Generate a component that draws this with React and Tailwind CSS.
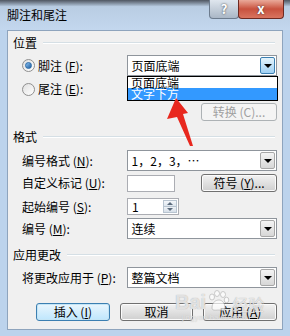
import React from "react";

const font = { fontFamily: '"Noto Sans CJK SC", "Liberation Sans", sans-serif' };

const Arrow = ({ blue }) => (
  <div
    className={
      "absolute right-[1px] top-[1px] bottom-[1px] w-[15px] flex items-center justify-center border rounded-[2px] " +
      (blue
        ? "border-[#3c7fb1] bg-gradient-to-b from-[#e5f4fc] to-[#9fd0f3]"
        : "border-[#a7a7a7] bg-gradient-to-b from-[#f4f4f4] to-[#d7d7d7]")
    }
  >
    <div className="w-0 h-0 border-l-[4px] border-r-[4px] border-t-[4px] border-l-transparent border-r-transparent border-t-black" />
  </div>
);

const Combo = ({ value, blue, className = "" }) => (
  <div className={"relative h-[21px] w-[151px] bg-white border border-[#8f959c] flex items-center pl-[4px] " + className}>
    <span className="text-[12px] text-black leading-none">{value}</span>
    <Arrow blue={blue} />
  </div>
);

const Btn = ({ children, def, disabled, className = "" }) => (
  <div
    className={
      "h-[18px] flex items-center justify-center rounded-[3px] border text-[12px] leading-none " +
      (def
        ? "border-[#3c7fb1] bg-gradient-to-b from-[#eaf6fd] to-[#bee6fd] shadow-[inset_0_0_0_1px_#c4e5f6] text-black "
        : disabled
        ? "border-[#adb2b5] bg-[#f4f4f4] text-[#a0a0a0] "
        : "border-[#707070] bg-gradient-to-b from-[#f2f2f2] to-[#cfcfcf] shadow-[inset_0_0_0_1px_#fbfbfb] text-black ") +
      className
    }
  >
    {children}
  </div>
);

const Group = ({ title, className = "" }) => (
  <div className={"flex items-center h-[14px] " + className}>
    <span className="text-[12px] leading-none text-black">{title}</span>
    <div className="flex-1 ml-[6px] mr-[2px] h-[2px] border-t border-[#d5dfe5] border-b-white border-b" />
  </div>
);

const Label = ({ children }) => (
  <div className="w-[114px] pl-[9px] text-[12px] leading-none text-black whitespace-nowrap">{children}</div>
);

const Radio = ({ checked }) => (
  <div className="w-[13px] h-[13px] rounded-full border border-[#8f8f8f] bg-gradient-to-br from-[#e0e0e0] to-[#ffffff] flex items-center justify-center">
    {checked && (
      <div className="w-[7px] h-[7px] rounded-full bg-gradient-to-br from-[#8bc4f5] to-[#1c5c9c] border border-[#2a6aa8]" />
    )}
  </div>
);

export default function App() {
  return (
    <div className="relative w-[290px] h-[336px] overflow-hidden bg-[#bcd3ec]" style={font}>
      {/* title bar */}
      <div className="relative h-[30px] bg-gradient-to-b from-[#4f5661] via-[#b9cde3] via-[22%] to-[#c3d7ee]">
        <div className="absolute left-[7px] top-[7px] text-[12px] leading-[16px] text-black">脚注和尾注</div>
        <div className="absolute left-[209px] top-0 w-[30px] h-[19px] rounded-b-[4px] border border-t-0 border-[#6d7c8e] bg-gradient-to-b from-[#dfe6ee] to-[#aab7c6] flex items-center justify-center text-white font-bold text-[13px] [text-shadow:0_0_2px_#333]">
          ?
        </div>
        <div className="absolute left-[238px] top-0 w-[46px] h-[19px] rounded-b-[4px] border border-t-0 border-[#6e2a22] bg-gradient-to-b from-[#e9a99a] via-[#c8513e] to-[#d9745f] flex items-center justify-center text-white font-bold text-[13px] [text-shadow:0_0_2px_#333]">
          x
        </div>
      </div>

      {/* client */}
      <div className="mx-[7px] h-[300px] border border-[#8ea4bd] bg-[#f0f0f0] pl-[5px] pr-[5px]">
        <Group title="位置" className="mt-[5px]" />

        <div className="flex items-center mt-[5px] h-[21px]">
          <div className="w-[114px] pl-[9px] flex items-center">
            <Radio checked />
            <span className="ml-[3px] text-[12px] leading-none">脚注 (<u>F</u>):</span>
          </div>
          <Combo value="页面底端" blue />
        </div>

        <div className="flex items-center mt-[3px] h-[20px]">
          <div className="w-[114px] pl-[9px] flex items-center">
            <Radio />
            <span className="ml-[3px] text-[12px] leading-none">尾注 (<u>E</u>):</span>
          </div>
        </div>

        <div className="flex justify-end mt-[4px]">
          <Btn disabled className="w-[76px]">转换 (C)...</Btn>
        </div>

        <Group title="格式" className="mt-[9px]" />

        <div className="flex items-center mt-[6px]">
          <Label>编号格式 (<u>N</u>):</Label>
          <Combo value="1，2，3，⋯" />
        </div>

        <div className="flex items-center mt-[3px] h-[18px]">
          <Label>自定义标记 (<u>U</u>):</Label>
          <div className="w-[48px] h-[17px] bg-white border border-[#abadb3]" />
          <div className="flex-1" />
          <Btn className="w-[76px]">符号 (<u>Y</u>)...</Btn>
        </div>

        <div className="flex items-center mt-[6px]">
          <Label>起始编号 (<u>S</u>):</Label>
          <div className="relative w-[52px] h-[17px] bg-white border border-[#abadb3] flex items-center pl-[4px]">
            <span className="text-[12px] leading-none">1</span>
            <div className="absolute right-[1px] top-[1px] bottom-[1px] w-[14px] flex flex-col">
              <div className="flex-1 border border-[#b8c4d0] bg-gradient-to-b from-[#f4f7fa] to-[#dde5ee] flex items-center justify-center">
                <div className="w-0 h-0 border-l-[3px] border-r-[3px] border-b-[3px] border-l-transparent border-r-transparent border-b-[#5a6a7c]" />
              </div>
              <div className="flex-1 border border-t-0 border-[#b8c4d0] bg-gradient-to-b from-[#eef2f6] to-[#d6dfe9] flex items-center justify-center">
                <div className="w-0 h-0 border-l-[3px] border-r-[3px] border-t-[3px] border-l-transparent border-r-transparent border-t-[#5a6a7c]" />
              </div>
            </div>
          </div>
        </div>

        <div className="flex items-center mt-[3px]">
          <Label>编号 (<u>M</u>):</Label>
          <Combo value="连续" />
        </div>

        <Group title="应用更改" className="mt-[9px]" />

        <div className="flex items-center mt-[5px]">
          <Label>将更改应用于 (<u>P</u>):</Label>
          <Combo value="整篇文档" />
        </div>

        <div className="flex items-center mt-[15px] pl-[23px] gap-[10px]">
          <Btn def className="w-[74px]">插入 (<u>I</u>)</Btn>
          <Btn className="w-[74px]">取消</Btn>
          <Btn className="w-[74px]">应用 (<u>A</u>)</Btn>
        </div>
      </div>

      {/* open dropdown list */}
      <div className="absolute left-[127px] top-[76px] w-[151px] h-[25px] bg-white border border-black text-[12px] leading-[11px]">
        <div className="h-[11px] pl-[3px] text-black">页面底端</div>
        <div className="h-[12px] pl-[3px] bg-[#3399ff] text-white leading-[12px]">文字下方</div>
      </div>

      {/* red annotation arrow */}
      <svg className="absolute left-0 top-0" width="290" height="336">
        <polygon points="176,98 188,113 183,114 193,146 190,146 177,117 167,119" fill="#e8281e" />
      </svg>

      {/* watermark */}
      <div className="absolute left-[175px] top-[290px] flex items-end text-white/70 [text-shadow:0_0_1px_#9a9a9a] pointer-events-none">
        <span className="text-[20px] font-bold leading-none" style={{ fontFamily: '"Liberation Sans", sans-serif' }}>Bai</span>
        <svg width="24" height="22" viewBox="0 0 24 22" className="opacity-70">
          <g fill="#fff" stroke="#a8a8a8" strokeWidth="0.8">
            <ellipse cx="6" cy="7" rx="2.5" ry="3" />
            <ellipse cx="11" cy="3.5" rx="2.5" ry="3" />
            <ellipse cx="17" cy="4.5" rx="2.5" ry="3" />
            <ellipse cx="20.5" cy="10" rx="2.3" ry="2.8" />
            <path d="M6 18 C6 12 10 10 13 10 C16 10 19 13 19 18 C19 21 15 20 12.5 20 C10 20 6 21 6 18 Z" />
          </g>
        </svg>
        <span className="text-[16px] leading-none ml-[2px]">经验</span>
      </div>
      <div className="absolute left-[182px] top-[314px] text-[8px] leading-none text-white/50 [text-shadow:0_0_1px_#bbb]" style={{ fontFamily: '"Liberation Sans", sans-serif' }}>
        jingyan.baidu.com
      </div>
    </div>
  );
}
